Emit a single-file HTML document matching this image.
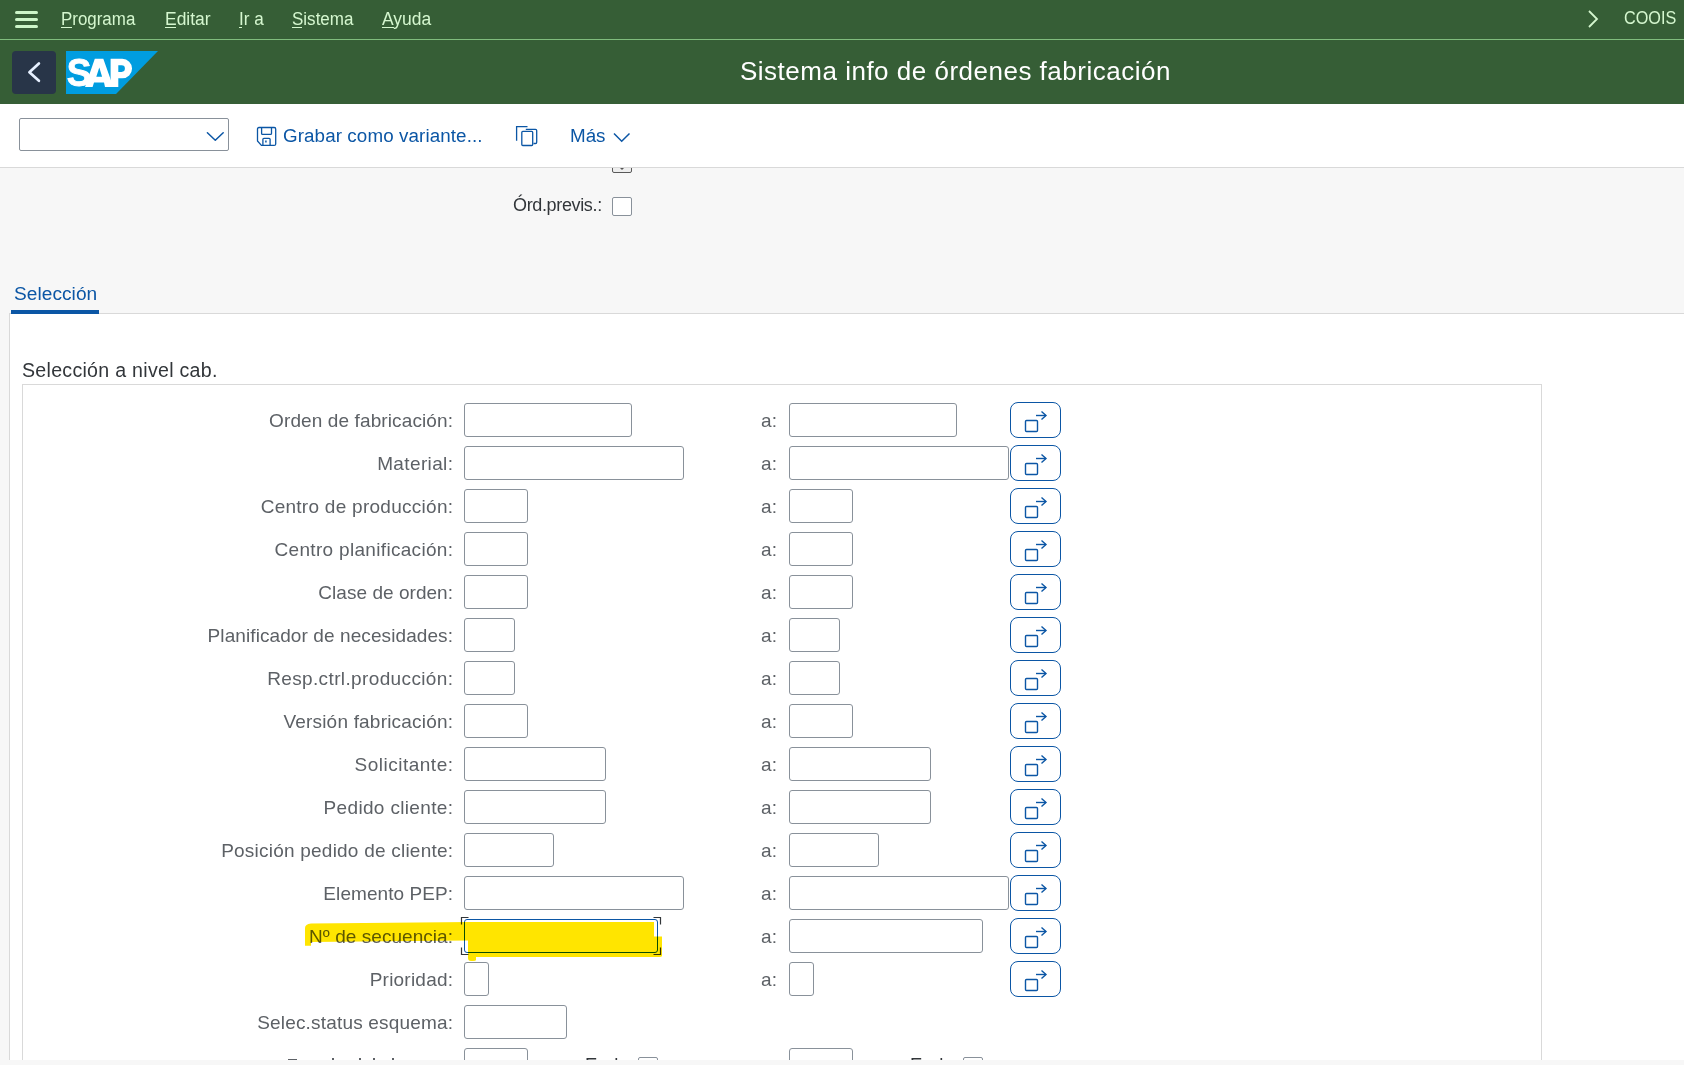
<!DOCTYPE html>
<html><head><meta charset="utf-8">
<style>
*{margin:0;padding:0;box-sizing:border-box}
html,body{width:1684px;height:1065px;overflow:hidden;background:#f7f7f7;font-family:"Liberation Sans",sans-serif}
body{position:relative}
.abs{position:absolute}
#menubar{position:absolute;left:0;top:0;width:1684px;height:39px;background:#365e36}
#sep{position:absolute;left:0;top:39px;width:1684px;height:1px;background:#80bd7d}
#titlebar{position:absolute;left:0;top:40px;width:1684px;height:64px;background:#365e36}
.mi{position:absolute;top:9px;font-size:18px;color:#d5f7cf;white-space:nowrap;line-height:20px;transform-origin:0 0}
.ul{position:absolute;top:27px;height:1.2px;background:#d5f7cf}
.ham{position:absolute;left:15px;width:23px;height:3px;border-radius:2px;background:#ccf5c8}
#back{position:absolute;left:12px;top:51px;width:44px;height:43px;background:#283548;border-radius:4px}
#title{position:absolute;top:56px;left:740px;font-size:26px;letter-spacing:0.5px;color:#fff;white-space:nowrap;line-height:30px}
#toolbar{position:absolute;left:0;top:104px;width:1684px;height:64px;background:#fff;border-bottom:1px solid #d9d9d9}
.blue{color:#0b56a5}
#panel{position:absolute;left:9px;top:313px;width:1675px;height:747px;background:#fff;border-left:1px solid #d9d9d9;border-top:1px solid #d9d9d9}
#group{position:absolute;left:22px;top:384px;width:1520px;height:680px;border:1px solid #d9d9d9;border-bottom:none}
.lbl{position:absolute;font-size:19px;color:#5d6166;white-space:nowrap;line-height:22px}
.inp{position:absolute;height:34px;border:1px solid #89919a;border-radius:3px;background:#fff}
.foc{border-color:#0b56a5;height:34px}
.btn{position:absolute;left:1010px;width:51px;height:36px;border:1.3px solid #0b56a5;border-radius:8px;background:#fff}
.btn svg{position:absolute;left:-1.3px;top:-1.3px}
.cb{position:absolute;width:20px;height:20px;border:1.3px solid #89919a;border-radius:2px;background:#fff}
</style></head><body>
<svg width="0" height="0" style="position:absolute"><defs><g id="ico" fill="none" stroke="#0b56a5" stroke-width="1.4"><rect x="15.5" y="18.5" width="12" height="11" rx="1"/><path d="M26 13.5 H36"/><path d="M31.5 9.5 L36 13.5 L31.5 17.5"/></g></defs></svg>

<!-- gray scrolled area -->
<div class="abs" style="left:612px;top:150px;width:20px;height:23px;border:1.3px solid #595959;border-radius:2px;background:#eee"></div><svg class="abs" style="left:618px;top:166px" width="8" height="6"><path d="M1 1 H7 L4 4 Z" fill="#555"/></svg>
<div class="abs" style="left:513px;top:194.4px;font-size:18px;line-height:22px;color:#32363a;white-space:nowrap;letter-spacing:-0.35px">Órd.previs.:</div>
<div class="cb" style="left:612px;top:197px;width:19.5px;height:19px"></div>
<div class="abs blue" style="left:14px;top:282.5px;font-size:19.1px;letter-spacing:0.05px;line-height:22px;white-space:nowrap">Selección</div>

<div id="panel"></div>
<div class="abs" style="left:11px;top:310px;width:88px;height:3.6px;background:#0b56a5"></div>
<div class="abs" style="left:22px;top:357.6px;font-size:19.6px;line-height:24px;color:#32363a;white-space:nowrap;letter-spacing:0.28px">Selección a nivel cab.</div>
<div id="group"></div>

<div class="lbl" style="right:1230.885px;top:410px;letter-spacing:0.115px">Orden de fabricación:</div>
<div class="inp" style="left:464px;top:403px;width:168px"></div>
<div class="lbl" style="left:761px;top:410px;letter-spacing:0.3px">a:</div>
<div class="inp" style="left:789px;top:403px;width:168px"></div>
<div class="btn" style="top:402px"><svg width="51" height="36"><use href="#ico"/></svg></div>
<div class="lbl" style="right:1230.625px;top:453px;letter-spacing:0.375px">Material:</div>
<div class="inp" style="left:464px;top:446px;width:220px"></div>
<div class="lbl" style="left:761px;top:453px;letter-spacing:0.3px">a:</div>
<div class="inp" style="left:789px;top:446px;width:220px"></div>
<div class="btn" style="top:445px"><svg width="51" height="36"><use href="#ico"/></svg></div>
<div class="lbl" style="right:1230.730px;top:496px;letter-spacing:0.27px">Centro de producción:</div>
<div class="inp" style="left:464px;top:489px;width:64px"></div>
<div class="lbl" style="left:761px;top:496px;letter-spacing:0.3px">a:</div>
<div class="inp" style="left:789px;top:489px;width:64px"></div>
<div class="btn" style="top:488px"><svg width="51" height="36"><use href="#ico"/></svg></div>
<div class="lbl" style="right:1230.685px;top:539px;letter-spacing:0.315px">Centro planificación:</div>
<div class="inp" style="left:464px;top:532px;width:64px"></div>
<div class="lbl" style="left:761px;top:539px;letter-spacing:0.3px">a:</div>
<div class="inp" style="left:789px;top:532px;width:64px"></div>
<div class="btn" style="top:531px"><svg width="51" height="36"><use href="#ico"/></svg></div>
<div class="lbl" style="right:1230.964px;top:582px;letter-spacing:0.036px">Clase de orden:</div>
<div class="inp" style="left:464px;top:575px;width:64px"></div>
<div class="lbl" style="left:761px;top:582px;letter-spacing:0.3px">a:</div>
<div class="inp" style="left:789px;top:575px;width:64px"></div>
<div class="btn" style="top:574px"><svg width="51" height="36"><use href="#ico"/></svg></div>
<div class="lbl" style="right:1230.907px;top:625px;letter-spacing:0.093px">Planificador de necesidades:</div>
<div class="inp" style="left:464px;top:618px;width:51px"></div>
<div class="lbl" style="left:761px;top:625px;letter-spacing:0.3px">a:</div>
<div class="inp" style="left:789px;top:618px;width:51px"></div>
<div class="btn" style="top:617px"><svg width="51" height="36"><use href="#ico"/></svg></div>
<div class="lbl" style="right:1230.630px;top:668px;letter-spacing:0.37px">Resp.ctrl.producción:</div>
<div class="inp" style="left:464px;top:661px;width:51px"></div>
<div class="lbl" style="left:761px;top:668px;letter-spacing:0.3px">a:</div>
<div class="inp" style="left:789px;top:661px;width:51px"></div>
<div class="btn" style="top:660px"><svg width="51" height="36"><use href="#ico"/></svg></div>
<div class="lbl" style="right:1230.800px;top:711px;letter-spacing:0.2px">Versión fabricación:</div>
<div class="inp" style="left:464px;top:704px;width:64px"></div>
<div class="lbl" style="left:761px;top:711px;letter-spacing:0.3px">a:</div>
<div class="inp" style="left:789px;top:704px;width:64px"></div>
<div class="btn" style="top:703px"><svg width="51" height="36"><use href="#ico"/></svg></div>
<div class="lbl" style="right:1230.491px;top:754px;letter-spacing:0.509px">Solicitante:</div>
<div class="inp" style="left:464px;top:747px;width:142px"></div>
<div class="lbl" style="left:761px;top:754px;letter-spacing:0.3px">a:</div>
<div class="inp" style="left:789px;top:747px;width:142px"></div>
<div class="btn" style="top:746px"><svg width="51" height="36"><use href="#ico"/></svg></div>
<div class="lbl" style="right:1230.657px;top:797px;letter-spacing:0.343px">Pedido cliente:</div>
<div class="inp" style="left:464px;top:790px;width:142px"></div>
<div class="lbl" style="left:761px;top:797px;letter-spacing:0.3px">a:</div>
<div class="inp" style="left:789px;top:790px;width:142px"></div>
<div class="btn" style="top:789px"><svg width="51" height="36"><use href="#ico"/></svg></div>
<div class="lbl" style="right:1230.777px;top:840px;letter-spacing:0.223px">Posición pedido de cliente:</div>
<div class="inp" style="left:464px;top:833px;width:90px"></div>
<div class="lbl" style="left:761px;top:840px;letter-spacing:0.3px">a:</div>
<div class="inp" style="left:789px;top:833px;width:90px"></div>
<div class="btn" style="top:832px"><svg width="51" height="36"><use href="#ico"/></svg></div>
<div class="lbl" style="right:1230.933px;top:883px;letter-spacing:0.067px">Elemento PEP:</div>
<div class="inp" style="left:464px;top:876px;width:220px"></div>
<div class="lbl" style="left:761px;top:883px;letter-spacing:0.3px">a:</div>
<div class="inp" style="left:789px;top:876px;width:220px"></div>
<div class="btn" style="top:875px"><svg width="51" height="36"><use href="#ico"/></svg></div>
<div class="lbl" style="right:1230.950px;top:926px;letter-spacing:0.05px">Nº de secuencia:</div>
<div class="inp foc" style="left:464px;top:919px;width:194px"></div>
<svg class="abs" style="left:460px;top:916px" width="202" height="40"><g fill="none" stroke="#32363a" stroke-width="1.2"><path d="M1.5 8.5 V1.5 H8.5"/><path d="M193.5 1.5 H200.5 V8.5"/><path d="M1.5 31.5 V38.5 H8.5"/><path d="M193.5 38.5 H200.5 V31.5"/></g></svg>
<div class="lbl" style="left:761px;top:926px;letter-spacing:0.3px">a:</div>
<div class="inp" style="left:789px;top:919px;width:194px"></div>
<div class="btn" style="top:918px"><svg width="51" height="36"><use href="#ico"/></svg></div>
<div class="lbl" style="right:1230.778px;top:969px;letter-spacing:0.222px">Prioridad:</div>
<div class="inp" style="left:464px;top:962px;width:25px"></div>
<div class="lbl" style="left:761px;top:969px;letter-spacing:0.3px">a:</div>
<div class="inp" style="left:789px;top:962px;width:25px"></div>
<div class="btn" style="top:961px"><svg width="51" height="36"><use href="#ico"/></svg></div>
<div class="lbl" style="right:1230.820px;top:1012px;letter-spacing:0.18px">Selec.status esquema:</div>
<div class="inp" style="left:464px;top:1005px;width:103px"></div>

<!-- partial last row -->
<div class="inp" style="left:464px;top:1048px;width:64px"></div>
<div class="inp" style="left:789px;top:1048px;width:64px"></div>
<div class="cb" style="left:638px;top:1057.4px;width:19.5px"></div>
<div class="cb" style="left:963px;top:1057.4px;width:19.5px"></div>
<div class="abs" style="left:288px;top:1058.6px;width:9px;height:1.5px;background:#5d6166"></div><div class="abs" style="left:332.3px;top:1058.4px;width:2px;height:1.7px;background:#5d6166"></div><div class="abs" style="left:359.3px;top:1058.4px;width:2px;height:1.7px;background:#5d6166"></div><div class="abs" style="left:373.3px;top:1058.4px;width:2px;height:1.7px;background:#5d6166"></div><div class="abs" style="left:392.3px;top:1058.4px;width:2px;height:1.7px;background:#5d6166"></div>
<div class="lbl" style="left:585px;top:1054px;letter-spacing:-0.5px;font-size:18.5px;color:#32363a">Excl.</div>
<div class="lbl" style="left:910px;top:1054px;letter-spacing:-0.5px;font-size:18.5px;color:#32363a">Excl.</div>
<div class="abs" style="left:0;top:1060px;width:1684px;height:5px;background:#f7f7f7"></div>

<!-- highlight -->
<svg class="abs" style="left:0;top:0;mix-blend-mode:multiply" width="1684" height="1065"><path d="M305 928 Q305 924 311 923.5 L470 922 L654 922 L654 936.6 L662 936.6 L662 956 Q662 957 659 957 L476 957 L476 960 Q476 961 473 961 L471 961 Q468 961 468 958 L468 940.5 L311 942 L311 945.8 L305 945.8 Z" fill="#ffe500"/></svg>

<!-- toolbar -->
<div id="toolbar"></div>
<div class="abs inp" style="left:19px;top:118px;width:210px;height:33px;border-radius:2px"></div>
<svg class="abs" style="left:205px;top:130px" width="20" height="14"><path d="M2.4 2.7 L10.3 10.2 L18.2 2.7" fill="none" stroke="#0b56a5" stroke-width="1.5" stroke-linecap="round" stroke-linejoin="round"/></svg>
<svg class="abs" style="left:256px;top:126px" width="22" height="22"><g fill="none" stroke="#0b56a5" stroke-width="1.3" stroke-linejoin="round"><path d="M1.5 3 Q1.5 1.5 3 1.5 H18.2 Q19.7 1.5 19.7 3 V17.9 Q19.7 19.4 18.2 19.4 H5.4 L1.5 15 Z"/><path d="M5.6 1.5 V7.4 Q5.6 8.4 6.6 8.4 H14.5 Q15.5 8.4 15.5 7.4 V1.5"/><path d="M6.9 19.4 V13.3 Q6.9 12.3 7.9 12.3 H13.1 Q14.1 12.3 14.1 13.3 V19.4"/><path d="M9.9 14.6 V16.4" stroke-width="1.5"/></g></svg>
<div class="abs blue" style="left:283px;top:125px;font-size:18.8px;letter-spacing:0.1px;line-height:22px;white-space:nowrap">Grabar como variante...</div>
<svg class="abs" style="left:514px;top:124px" width="26" height="24"><g fill="none" stroke="#0b56a5" stroke-width="1.3"><path d="M2.6 16.7 V2.6 H13.5"/><path d="M11.8 5.4 H21.5 Q22.7 5.4 22.7 6.6 V18.3 Q22.7 19.5 21.5 19.5 H19.5"/><rect x="7.8" y="7.4" width="10.9" height="14.1" rx="1"/></g></svg>
<div class="abs blue" style="left:570px;top:125px;font-size:18.8px;line-height:22px;white-space:nowrap">Más</div>
<svg class="abs" style="left:611px;top:130px" width="22" height="14"><path d="M3 3.5 L10.7 11.2 L18.5 3.5" fill="none" stroke="#0b56a5" stroke-width="1.5"/></svg>

<!-- header -->
<div id="menubar"></div>
<div id="sep"></div>
<div id="titlebar"></div>
<div class="ham" style="top:11px"></div>
<div class="ham" style="top:18px"></div>
<div class="ham" style="top:25px"></div>
<div class="mi" style="left:61px;transform:scaleX(0.94)">Programa</div><div class="ul" style="left:61px;width:11px"></div>
<div class="mi" style="left:165px;transform:scaleX(0.97)">Editar</div><div class="ul" style="left:165px;width:11px"></div>
<div class="mi" style="left:239px;transform:scaleX(0.95)">Ir a</div><div class="ul" style="left:239px;width:3px"></div>
<div class="mi" style="left:292px;transform:scaleX(0.945)">Sistema</div><div class="ul" style="left:292px;width:10px"></div>
<div class="mi" style="left:382px;transform:scaleX(0.97)">Ayuda</div><div class="ul" style="left:382px;width:12px"></div>
<svg class="abs" style="left:1585px;top:9px" width="16" height="20"><path d="M4 2 L12 10 L4 18" fill="none" stroke="#d5f7cf" stroke-width="1.8"/></svg>
<div class="mi" style="left:1623.5px;top:8.3px;transform:scaleX(0.9)">COOIS</div>
<div id="back"><svg width="44" height="43"><path d="M26.9 12.5 L17.4 21.2 L26.9 29.8" fill="none" stroke="#e6f0ff" stroke-width="2.7" stroke-linecap="round" stroke-linejoin="round"/></svg></div>
<svg class="abs" style="left:66px;top:51px" width="92" height="43">
<polygon points="0,0 92,0 50,43 0,43" fill="#009de0"/>
<g fill="#fff" stroke="#fff" stroke-width="0.9" font-family="Liberation Sans" font-weight="bold" font-size="39">
<text x="0.7" y="35.5" transform="scale(0.95 1)">S</text></g>
<path fill="#fff" fill-rule="evenodd" d="M19 35.9 L28.8 7.8 H37.3 L47.3 35.9 H39 L38 31.4 H28 L26.6 35.9 Z M30.3 25.8 L33.3 16.5 L36.1 25.8 Z"/>
<path fill="#fff" fill-rule="evenodd" d="M44.6 7.8 H56.3 A9.75 9.75 0 0 1 56.3 27.3 H52.3 V35.9 H44.6 Z M52.3 14.3 H55.6 A3.3 3.3 0 0 1 55.6 20.9 H52.3 Z"/>
</svg>
<div id="title">Sistema info de órdenes fabricación</div>
</body></html>
